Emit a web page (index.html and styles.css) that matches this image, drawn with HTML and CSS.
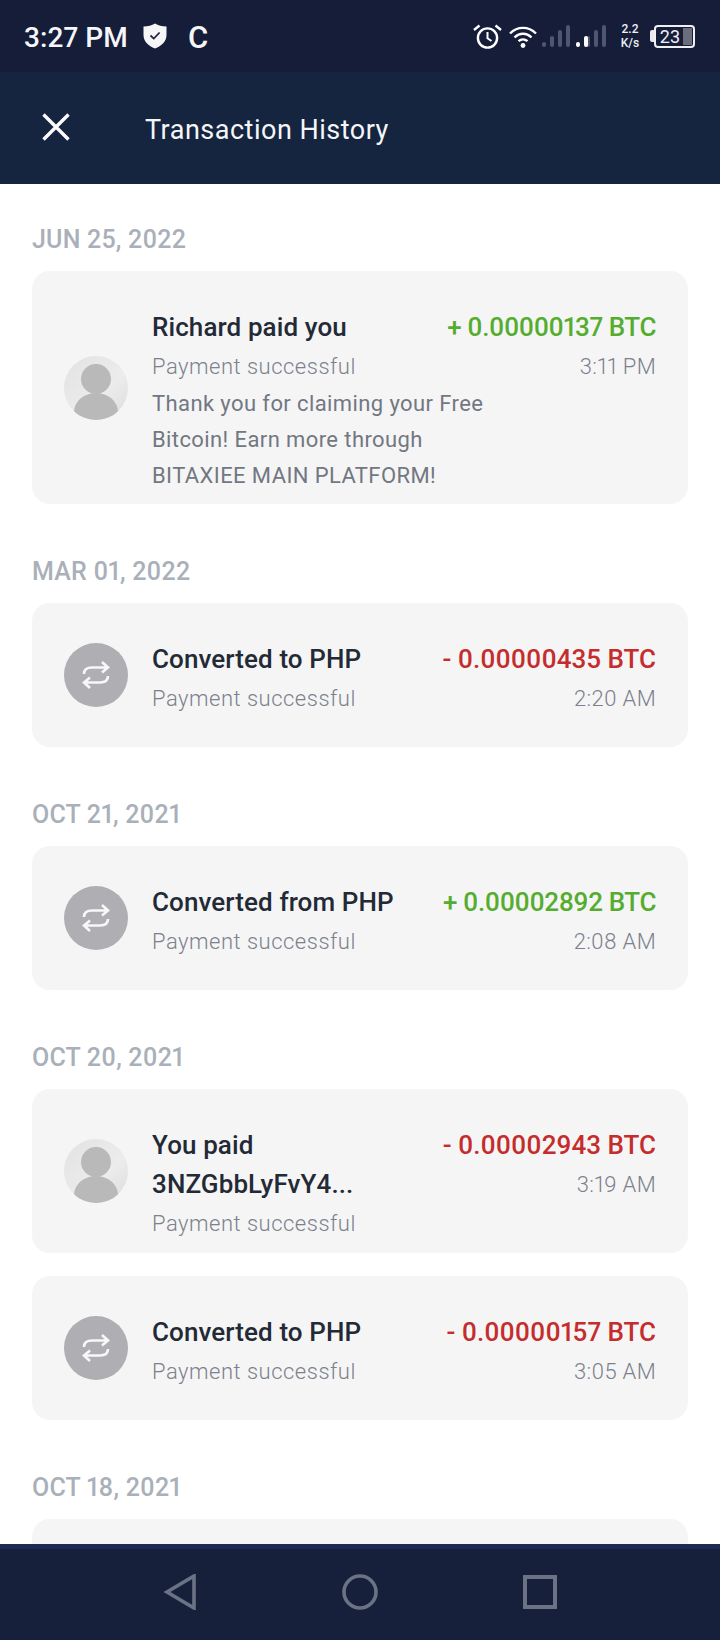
FILE: index.html
```html
<!DOCTYPE html>
<html lang="en">
<head>
<meta charset="utf-8">
<title>Transaction History</title>
<link rel="stylesheet" href="styles.css">
</head>
<body>
<div class="screen">
  <div class="status">
    <div class="status-left">
      <span class="clock">3:27 PM</span>
      <svg class="shield" viewBox="0 0 24 26"><path d="M12 0.5C15 2.5 19 3.5 23.5 3.5V12C23.5 18.5 18.5 23 12 25.5C5.5 23 0.5 18.5 0.5 12V3.5C5 3.5 9 2.5 12 0.5Z" fill="#f6f6f8"/><path d="M7.5 12.5L10.8 15.6L16.6 9.5" fill="none" stroke="#20263f" stroke-width="1.8"/></svg>
      <span class="carrier">C</span>
    </div>
    <div class="status-right">
      <svg class="alarm" viewBox="0 0 29 25"><circle cx="14.5" cy="14" r="9.6" fill="none" stroke="#fff" stroke-width="2.4"/><path d="M14.5 8V14.3L18.5 17" fill="none" stroke="#fff" stroke-width="2"/><path d="M1 6L6.5 1.5M28 6L22.5 1.5" stroke="#fff" stroke-width="2.4" fill="none"/></svg>
      <svg class="wifi" viewBox="0 0 28 23"><path d="M1 8.5C8.5 1 19.5 1 27 8.5M5.5 12.5C10.5 7.5 17.5 7.5 22.5 12.5M9.5 16.2C12.2 13.8 15.8 13.8 18.5 16.2" fill="none" stroke="#fff" stroke-width="2.4"/><circle cx="14" cy="20.5" r="2.4" fill="#fff"/></svg>
      <svg class="signal" viewBox="0 0 64 23"><g fill="#4f566f"><rect x="0" y="17" width="4" height="5" rx="2"/><rect x="8" y="11" width="4" height="11" rx="2"/><rect x="16" y="5" width="4" height="17" rx="2"/><rect x="24" y="0" width="4" height="22" rx="2"/><rect x="44" y="11" width="4" height="11" rx="2"/><rect x="52" y="5" width="4" height="17" rx="2"/><rect x="60" y="0" width="4" height="22" rx="2"/></g><rect x="34" y="17" width="4" height="5" rx="2" fill="#fff"/><rect x="42" y="11" width="4" height="11" rx="2" fill="#fff"/></svg>
      <div class="speed"><span>2.2</span><span>K/s</span></div>
      <div class="battery"><span class="battery-nub"></span><div class="battery-box"><span class="battery-num">23</span><span class="battery-fill"></span></div></div>
    </div>
  </div>

  <header class="appbar">
    <svg class="close" viewBox="0 0 28 28"><path d="M1.5 1.5L26.5 26.5M26.5 1.5L1.5 26.5" stroke="#fdfdfd" stroke-width="3.4" fill="none"/></svg>
    <h1 class="appbar-title">Transaction History</h1>
  </header>

  <main class="list">
    <section class="group">
      <h2 class="date">JUN 25, 2022</h2>
      <article class="card">
        <svg class="avatar" viewBox="0 0 64 64"><defs><linearGradient id="ag" x1="0" y1="0" x2="1" y2="1"><stop offset="0" stop-color="#e2e2e2"/><stop offset="0.6" stop-color="#ececec"/><stop offset="1" stop-color="#dcdcdc"/></linearGradient><clipPath id="ac"><circle cx="32" cy="32" r="32"/></clipPath></defs><circle cx="32" cy="32" r="32" fill="url(#ag)"/><g clip-path="url(#ac)" fill="#b9b9b9"><circle cx="32" cy="23" r="15"/><ellipse cx="32" cy="56" rx="22" ry="19"/></g></svg>
        <div class="body">
          <div class="rows">
            <div class="main-col">
              <div class="title">Richard paid you</div>
              <div class="sub">Payment successful</div>
            </div>
            <div class="side-col">
              <div class="amount plus">+ 0.00000137 BTC</div>
              <div class="time">3:11 PM</div>
            </div>
          </div>
          <div class="desc">Thank you for claiming your Free<br>Bitcoin! Earn more through<br>BITAXIEE MAIN PLATFORM!</div>
        </div>
      </article>
    </section>

    <section class="group">
      <h2 class="date">MAR 01, 2022</h2>
      <article class="card">
        <svg class="avatar" viewBox="0 0 64 64"><circle cx="32" cy="32" r="32" fill="#aeaeb3"/><path d="M20 31C20 25.5 24 24.5 28 24.5H43M38 19L44 24.5L38 29.5M44 33C44 38.5 40 39.5 36 39.5H21M26 34.5L20 39.5L26 45" fill="none" stroke="#f8f8f8" stroke-width="2.6"/></svg>
        <div class="body">
          <div class="rows">
            <div class="main-col">
              <div class="title">Converted to PHP</div>
              <div class="sub">Payment successful</div>
            </div>
            <div class="side-col">
              <div class="amount minus">- 0.00000435 BTC</div>
              <div class="time">2:20 AM</div>
            </div>
          </div>
        </div>
      </article>
    </section>

    <section class="group">
      <h2 class="date">OCT 21, 2021</h2>
      <article class="card">
        <svg class="avatar" viewBox="0 0 64 64"><circle cx="32" cy="32" r="32" fill="#aeaeb3"/><path d="M20 31C20 25.5 24 24.5 28 24.5H43M38 19L44 24.5L38 29.5M44 33C44 38.5 40 39.5 36 39.5H21M26 34.5L20 39.5L26 45" fill="none" stroke="#f8f8f8" stroke-width="2.6"/></svg>
        <div class="body">
          <div class="rows">
            <div class="main-col">
              <div class="title">Converted from PHP</div>
              <div class="sub">Payment successful</div>
            </div>
            <div class="side-col">
              <div class="amount plus">+ 0.00002892 BTC</div>
              <div class="time">2:08 AM</div>
            </div>
          </div>
        </div>
      </article>
    </section>

    <section class="group">
      <h2 class="date">OCT 20, 2021</h2>
      <article class="card">
        <svg class="avatar" viewBox="0 0 64 64"><defs><linearGradient id="ag2" x1="0" y1="0" x2="1" y2="1"><stop offset="0" stop-color="#e2e2e2"/><stop offset="0.6" stop-color="#ececec"/><stop offset="1" stop-color="#dcdcdc"/></linearGradient><clipPath id="ac2"><circle cx="32" cy="32" r="32"/></clipPath></defs><circle cx="32" cy="32" r="32" fill="url(#ag2)"/><g clip-path="url(#ac2)" fill="#b9b9b9"><circle cx="32" cy="23" r="15"/><ellipse cx="32" cy="56" rx="22" ry="19"/></g></svg>
        <div class="body">
          <div class="rows">
            <div class="main-col">
              <div class="title">You paid<br>3NZGbbLyFvY4...</div>
              <div class="sub">Payment successful</div>
            </div>
            <div class="side-col">
              <div class="amount minus">- 0.00002943 BTC</div>
              <div class="time">3:19 AM</div>
            </div>
          </div>
        </div>
      </article>
      <article class="card">
        <svg class="avatar" viewBox="0 0 64 64"><circle cx="32" cy="32" r="32" fill="#aeaeb3"/><path d="M20 31C20 25.5 24 24.5 28 24.5H43M38 19L44 24.5L38 29.5M44 33C44 38.5 40 39.5 36 39.5H21M26 34.5L20 39.5L26 45" fill="none" stroke="#f8f8f8" stroke-width="2.6"/></svg>
        <div class="body">
          <div class="rows">
            <div class="main-col">
              <div class="title">Converted to PHP</div>
              <div class="sub">Payment successful</div>
            </div>
            <div class="side-col">
              <div class="amount minus">- 0.00000157 BTC</div>
              <div class="time">3:05 AM</div>
            </div>
          </div>
        </div>
      </article>
    </section>

    <section class="group">
      <h2 class="date">OCT 18, 2021</h2>
      <article class="card"></article>
    </section>
  </main>

  <nav class="navbar">
    <svg class="nav-icon" viewBox="0 0 32 36"><path d="M30 2V34L3 18Z" fill="none" stroke="#6b7285" stroke-width="3.6"/></svg>
    <svg class="nav-icon" viewBox="0 0 36 36"><circle cx="18" cy="18" r="16" fill="none" stroke="#6b7285" stroke-width="3.6"/></svg>
    <svg class="nav-icon" viewBox="0 0 36 36"><rect x="3" y="3" width="30" height="30" fill="none" stroke="#6b7285" stroke-width="4"/></svg>
  </nav>
</div>
</body>
</html>
```

FILE: styles.css
```css
* { box-sizing: border-box; }
html, body { margin: 0; padding: 0; background: #fff; }
.screen {
  width: 720px;
  height: 1640px;
  display: flex;
  flex-direction: column;
  overflow: hidden;
  font-family: Roboto, "Liberation Sans", sans-serif;
  font-variant-numeric: proportional-nums;
}
.status {
  height: 72px;
  flex: none;
  background: #151d39;
  display: flex;
  align-items: center;
  justify-content: space-between;
  padding: 2px 24px 0;
  color: #fff;
}
.status-left { display: flex; align-items: center; }
.clock { font-size: 28px; font-weight: 500; letter-spacing: 0.1px; color: #f6f6f8; }
.shield { width: 24px; height: 26px; margin-left: 15px; margin-bottom: 2px; }
.carrier { font-size: 31px; font-weight: 500; margin-left: 21px; color: #f6f6f8; }
.status-right { display: flex; align-items: center; padding-right: 1px; margin-top: -2px; }
.alarm { width: 29px; height: 25px; }
.wifi { width: 28px; height: 23px; margin-left: 7px; }
.signal { width: 64px; height: 23px; margin-left: 5px; }
.speed {
  display: flex;
  flex-direction: column;
  align-items: center;
  width: 22px;
  margin-left: 13px;
  font-size: 12px;
  line-height: 14px;
  font-weight: 500;
  color: #eef0f4;
}
.battery { display: flex; align-items: center; margin-left: 9px; }
.battery-nub { width: 4px; height: 12px; background: #e8e8ee; border-radius: 2px 0 0 2px; }
.battery-box {
  width: 41px;
  height: 23px;
  border: 2px solid #f0f0f4;
  border-radius: 4px;
  display: flex;
  align-items: stretch;
  justify-content: flex-end;
  padding: 1px;
}
.battery-num { font-size: 18px; line-height: 17px; color: #f0f0f4; margin-right: 3px; }
.battery-fill { width: 9px; background: #6a6e7c; }
.appbar {
  height: 112px;
  flex: none;
  background: #15243f;
  display: flex;
  align-items: center;
  padding-left: 42px;
  padding-bottom: 2px;
}
.close { width: 28px; height: 28px; flex: none; }
.appbar-title {
  margin: 6px 0 0 75px;
  font-size: 27px;
  font-weight: 400;
  letter-spacing: 0.5px;
  color: #f4f6f8;
}
.list {
  flex: 1;
  min-height: 0;
  overflow: hidden;
  padding: 37px 32px 0;
}
.group { margin-bottom: 49px; }
.date {
  margin: 0 0 14px;
  padding-top: 1px;
  height: 36px;
  font-size: 25px;
  line-height: 36px;
  font-weight: 500;
  letter-spacing: 0.2px;
  color: #aab0b9;
}
.card {
  background: #f5f5f6;
  border-radius: 18px;
  min-height: 144px;
  padding: 0 32px;
  display: flex;
  align-items: center;
}
.card + .card { margin-top: 23px; }
.avatar { width: 64px; height: 64px; flex: none; }
.body {
  flex: 1;
  min-width: 0;
  margin-left: 24px;
  padding: 36px 0 10px;
  align-self: flex-start;
}
.rows { display: flex; justify-content: space-between; }
.main-col { white-space: nowrap; }
.title { font-size: 26px; line-height: 39px; font-weight: 500; color: #232a35; letter-spacing: 0.1px; padding-top: 1px; margin-bottom: -1px; }
.sub { font-size: 22px; line-height: 39px; padding-top: 1px; font-weight: 300; color: #7c818b; letter-spacing: 0.5px; }
.desc { font-size: 22px; line-height: 36px; color: #727781; letter-spacing: 0.4px; white-space: nowrap; }
.side-col { text-align: right; }
.amount { font-size: 26px; line-height: 39px; font-weight: 500; white-space: nowrap; padding-top: 1px; margin-bottom: -1px; }
.plus { color: #55ad2f; letter-spacing: -0.4px; }
.minus { color: #c52c2c; }
.time { font-size: 22px; line-height: 39px; padding-top: 1px; font-weight: 300; color: #7c818b; letter-spacing: 0.3px; }
.navbar {
  height: 96px;
  flex: none;
  background: #17203b;
  border-top: 5px solid #1c2a55;
  display: flex;
  align-items: center;
  justify-content: center;
  gap: 144px;
  padding-bottom: 5px;
}
.nav-icon { height: 36px; width: 36px; flex: none; }
```
